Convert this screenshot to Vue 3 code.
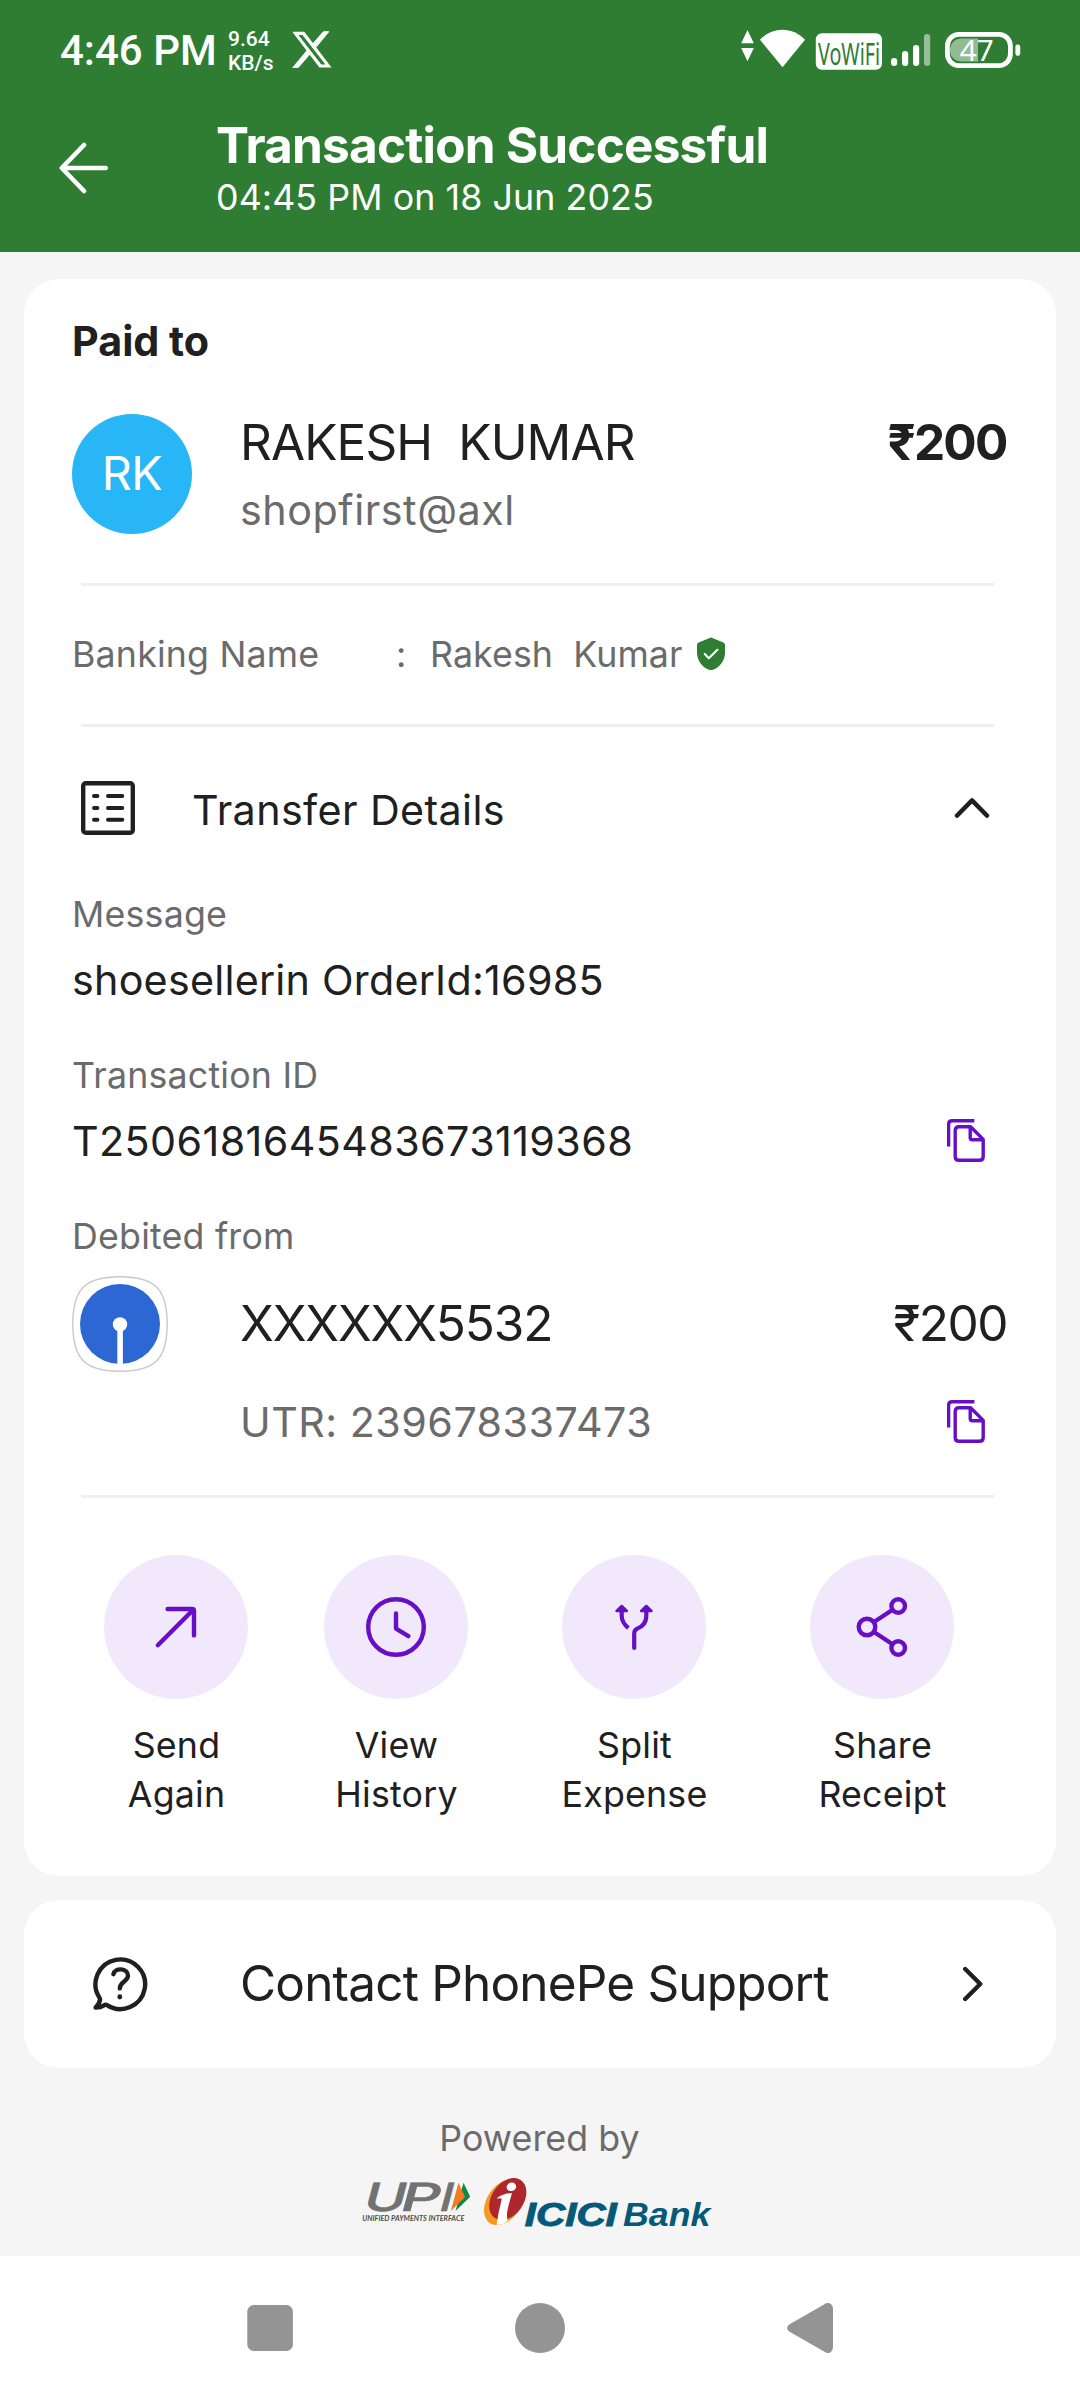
<script setup>
const payeeName = 'RAKESH\u00a0\u00a0KUMAR'
const bankingName = 'Rakesh\u00a0\u00a0Kumar'
const actions = [
  { id: 'send', top: 'Send', bottom: 'Again', cell: 'a1' },
  { id: 'history', top: 'View', bottom: 'History', cell: 'a2' },
  { id: 'split', top: 'Split', bottom: 'Expense', cell: 'a3' },
  { id: 'share', top: 'Share', bottom: 'Receipt', cell: 'a4' }
]
</script>

<template>
  <div class="screen">
    <header class="header">
      <div class="status">
        <span class="clock">4:46 PM</span>
        <span class="speed"><span>9.64</span><span>KB/s</span></span>
        <svg class="x-logo" width="40" height="37" viewBox="0 0 40 37">
          <path d="M36.8.7H31.4L21 12.6 24 16.2ZM.8 36.6H6.2L18.4 22.6 15.4 19Z" fill="#fff" stroke="#fff" stroke-width=".9" />
          <path d="M.3.7H12.3L39.5 36.6H27.4Z" fill="#fff" />
          <path d="M6.4 3.9H10.5L33.4 33.4H29.3Z" fill="#2e7d32" />
        </svg>
        <svg class="status-icons" width="282" height="54" viewBox="0 0 282 54" fill="#fff">
          <path d="M7.5 2 13.8 15.2H1.2ZM7.5 33.3 13.8 20H1.2Z" />
          <path d="M20 11.8C32 -1.6 53 -1.6 65 11.8L42.5 39.3Z" />
          <rect x="75.8" y="5.2" width="66.2" height="36.6" rx="6" />
          <text x="78" y="36.8" fill="#2e7d32" font-family="'Noto Sans'" font-weight="400" font-size="31" textLength="62" lengthAdjust="spacingAndGlyphs">VoWiFi</text>
          <rect x="151" y="30" width="6.2" height="8" rx="3" />
          <rect x="162" y="23" width="6.2" height="15" rx="3" />
          <rect x="173" y="17" width="6.2" height="21" rx="3" />
          <rect x="184" y="6" width="6.2" height="32" rx="3" opacity=".5" />
          <path d="M238 10.6V33.4H221A11 11 0 0 1 210 24V20A11 11 0 0 1 221 10.6Z" opacity=".48" />
          <rect x="207.4" y="6.4" width="63" height="31.2" rx="11.5" fill="none" stroke="#fff" stroke-width="4.8" />
          <rect x="275.4" y="16.4" width="4.8" height="11.4" rx="2.2" />
          <text x="219.8" y="33" font-family="'Noto Sans'" font-weight="400" font-size="29.5" textLength="34" lengthAdjust="spacingAndGlyphs">47</text>
        </svg>
      </div>
      <div class="title-bar">
        <svg class="back" width="50" height="54" viewBox="0 0 50 54" fill="none" stroke="#fff" stroke-width="4.6" stroke-linecap="round" stroke-linejoin="round">
          <path d="M46.7 27H3M25 4 2.8 27 25 50" />
        </svg>
        <div>
          <h1 class="title">Transaction Successful</h1>
          <p class="subtitle">04:45 PM on 18 Jun 2025</p>
        </div>
      </div>
    </header>

    <main>
      <section class="card">
        <h2 class="paid">Paid to</h2>
        <div class="payee">
          <div class="avatar"><span>RK</span></div>
          <div class="payee-text">
            <div class="name">{{ payeeName }}</div>
            <div class="vpa">shopfirst@axl</div>
          </div>
          <div class="amount strong">₹200</div>
        </div>
        <div class="rule"></div>
        <div class="banking">
          <span class="bk-label">Banking Name</span>
          <span class="bk-colon">:</span>
          <span class="bk-name">{{ bankingName }}</span>
          <svg class="shield" width="30" height="34" viewBox="0 0 30 34">
            <path d="M15 .6 27.4 5.6Q29 6.3 29 8V15.5C29 23.5 23.5 30.6 17 32.8Q15 33.4 13 32.8C6.5 30.6 1 23.5 1 15.5V8Q1 6.3 2.6 5.6Z" fill="#2e7d32" />
            <path d="M8.8 17 12.8 21.2 21.4 12.8" fill="none" stroke="#fff" stroke-width="2.2" stroke-linecap="round" stroke-linejoin="round" />
          </svg>
        </div>
        <div class="rule"></div>

        <div class="details-head">
          <svg width="54" height="54" viewBox="0 0 54 54" fill="none" stroke="#202020" stroke-width="4.4">
            <rect x="2.2" y="2.2" width="49.6" height="49.6" rx="2.6" />
            <path d="M13 15H16.4M27 15H41.3M13 27H16.4M27 27H41.3M13 38.8H16.4M27 38.8H41.3" stroke-linecap="round" stroke-width="4" />
          </svg>
          <span class="details-title">Transfer Details</span>
          <svg class="chev-up" width="36" height="22" viewBox="0 0 36 22" fill="none" stroke="#202020" stroke-width="4.4" stroke-linecap="round" stroke-linejoin="round">
            <path d="M3 18.6 18 3.4 33 18.6" />
          </svg>
        </div>

        <div class="field">
          <div class="label">Message</div>
          <div class="value msg">shoesellerin OrderId:16985</div>
        </div>
        <div class="field">
          <div class="label">Transaction ID</div>
          <div class="row">
            <div class="value txn">T2506181645483673119368</div>
            <svg class="copy" width="38" height="43" viewBox="0 0 38 43"><path d="M1.6 27.6V5.2Q1.6 1.7 5.1 1.7H27.4M12 7.8H23.6L36.2 20.4V37.4Q36.2 41.2 32.4 41.2H12Q8.2 41.2 8.2 37.4V11.6Q8.2 7.8 12 7.8ZM23.2 8V18.6Q23.2 20.8 25.4 20.8H36" /></svg>
          </div>
        </div>
        <div class="label debited">Debited from</div>
        <div class="account">
          <svg width="96" height="96" viewBox="0 0 96 96">
            <path d="M48 .8C83 .8 95.2 13 95.2 48S83 95.2 48 95.2 .8 83 .8 48 13 .8 48 .8Z" fill="#fff" stroke="#c8c8c8" stroke-width="1.4" />
            <circle cx="48" cy="48" r="40" fill="#2c67d4" />
            <path d="M45.3 50H50.9V89H45.3Z" fill="#fff" />
            <circle cx="48" cy="48.4" r="7.2" fill="#fff" />
          </svg>
          <div class="acc-no">XXXXXX5532</div>
          <div class="amount">₹200</div>
        </div>
        <div class="row utr-row">
          <div class="utr">UTR: 239678337473</div>
          <svg class="copy" width="38" height="43" viewBox="0 0 38 43"><path d="M1.6 27.6V5.2Q1.6 1.7 5.1 1.7H27.4M12 7.8H23.6L36.2 20.4V37.4Q36.2 41.2 32.4 41.2H12Q8.2 41.2 8.2 37.4V11.6Q8.2 7.8 12 7.8ZM23.2 8V18.6Q23.2 20.8 25.4 20.8H36" /></svg>
        </div>
        <div class="rule"></div>

        <div class="actions">
          <div v-for="a in actions" :key="a.id" class="action" :class="a.cell">
            <div class="bubble">
              <svg width="72" height="72" viewBox="-36 -36 72 72" fill="none" stroke="#660fc6" stroke-width="4.4" stroke-linecap="round" stroke-linejoin="round">
                <path v-if="a.id === 'send'" d="M-18.2 18.2 17-17M-8.4-18H16Q18-18 18-16V8.4" />
                <template v-else-if="a.id === 'history'">
                  <circle r="27.8" />
                  <path d="M0-13.6V1.6L12.4 9.2" />
                </template>
                <template v-else-if="a.id === 'split'">
                  <path d="M-12.3-17V-11Q-12-4-5.6 1" stroke-width="4.2" stroke-linecap="butt" />
                  <path d="M12.3-17V-11C12.3-5.5 9.2-.8 3.6 1.4Q.2 2.9.2 6.4V21" stroke-width="4.2" />
                  <path d="M-12.3-21-17.4-16H-7.2ZM12.3-21 7.2-16H17.4Z" fill="#660fc6" stroke-width="2.6" />
                </template>
                <template v-else>
                  <circle cx="-15" r="8.3" />
                  <circle cx="16.2" cy="-21" r="6.8" />
                  <circle cx="16.2" cy="21" r="6.8" />
                  <path d="M-8-5 10.2-17M-8 5 10.2 17" stroke-linecap="butt" />
                </template>
              </svg>
            </div>
            <div class="action-label">{{ a.top }}<br />{{ a.bottom }}</div>
          </div>
        </div>
      </section>

      <section class="card support">
        <svg width="56" height="56" viewBox="-28 -28 56 56" fill="none" stroke="#202020" stroke-width="4.4" stroke-linecap="round" stroke-linejoin="round">
          <path d="M-20.6 13.6A24.8 24.8 0 1 1 -13 21.2Q-14.4 20.4-16 21.4Q-19.8 23.8-24.4 23.6Q-20.6 19.4-20 16Q-19.8 14.8-20.6 13.6Z" />
          <path d="M-6.6-9.8C-5.2-16.6 8-16.4 8-8.2C8-2.6-.2-2.2-.2 4.4" />
          <path d="M-.2 12.6V13" stroke-width="4.8" />
        </svg>
        <span class="support-text">Contact PhonePe Support</span>
        <svg class="chev-right" width="22" height="36" viewBox="0 0 22 36" fill="none" stroke="#202020" stroke-width="4.4" stroke-linecap="round" stroke-linejoin="round">
          <path d="M3.2 3 18.2 18 3.2 33" />
        </svg>
      </section>

      <div class="powered">
        <div class="powered-text">Powered by</div>
        <svg width="356" height="76" viewBox="0 -14 356 76">
          <g font-family="Inter, sans-serif" font-size="38.8" font-weight="500" fill="#727272" stroke="#727272" stroke-width=".5" transform="translate(0 32.7) skewX(-15)">
            <text transform="translate(-.6 0) scale(1.47 1)">U</text>
            <text transform="translate(36.2 0) scale(1.6 1)">P</text>
            <text transform="translate(75.2 0) scale(1.25 1)">I</text>
          </g>
          <text x="0.3" y="43" font-family="Lato, sans-serif" font-size="7.6" font-weight="700" font-style="italic" fill="#4c4c4c" textLength="102" lengthAdjust="spacingAndGlyphs">UNIFIED PAYMENTS INTERFACE</text>
          <path d="M101.5 4.8 108.2 18.8 93.5 33Z" fill="#0b8a45" />
          <path d="M96.5 4.8 103 19 88.8 33Z" fill="#f47b20" />
          <g transform="translate(143 24)">
            <ellipse rx="25.5" ry="17" transform="translate(-.8 0) rotate(-55)" fill="#f7991c" />
            <ellipse rx="23" ry="16" transform="translate(2.8 -3) rotate(-55)" fill="#ad272d" />
            <ellipse cx="6.4" cy="-15.2" rx="4.8" ry="4.2" transform="rotate(-20 6.4 -15.2)" fill="#fff" />
            <path d="M-7.4-4.4Q0-9.4 7-8.8Q3.6 2 2.2 9.6Q1.6 16.8 2.8 18.4Q-1.6 23.4-8.4 22.6Q-6.6 10 -3.2-3.2Q-5-4.4-7.8-3.2Z" fill="#fff" />
          </g>
          <g font-family="'Liberation Sans', sans-serif" font-style="italic" font-weight="700" fill="#055a78">
            <text x="162.8" y="47.5" font-size="33" stroke="#055a78" stroke-width="1" textLength="92" lengthAdjust="spacingAndGlyphs">ICICI</text>
            <text x="261" y="47.5" font-size="33" textLength="87.5" lengthAdjust="spacingAndGlyphs">Bank</text>
          </g>
        </svg>
      </div>
    </main>

    <nav class="nav">
      <svg width="1080" height="144" viewBox="0 0 1080 144" fill="#949494">
        <rect x="247.3" y="49" width="45.6" height="46" rx="6.5" />
        <circle cx="540" cy="72" r="25" />
        <path d="M824 48.4Q827.2 45.8 830.6 47.8Q833 49.4 833 53V91Q833 94.6 830.6 96.2Q827.2 98.2 824 95.6L789.2 75.6Q785 72 789.2 68.4Z" />
      </svg>
    </nav>
  </div>
</template>

<style>
body { background: #f5f5f5; }
</style>

<style scoped>
* { box-sizing: border-box; margin: 0; padding: 0; }
.screen {
  width: 1080px; height: 2400px; display: flex; flex-direction: column; overflow: hidden;
  background: #f5f5f5; color: #202020; font-family: Inter, "Noto Sans", sans-serif; font-size: 35.75px;
}
svg { display: block; flex: none; }
.header { height: 252px; background: #2e7d32; color: #fff; }
.status { display: flex; height: 115px; font-family: Roboto, sans-serif; font-weight: 500; padding-left: 60px; white-space: nowrap; }
.clock { width: 168px; font-size: 42px; line-height: 50px; padding-top: 26px; }
.speed { display: flex; flex-direction: column; width: 64px; font-size: 21px; line-height: 24px; padding-top: 27px; }
.x-logo { margin-top: 31px; }
.status-icons { margin: 28px 0 0 408px; }
.title-bar { display: flex; }
.back { margin: 26px 107px 0 59px; }
.title { font-size: 49.5px; line-height: 60px; font-weight: 700; letter-spacing: -.8px; }
.subtitle { font-size: 35.75px; line-height: 44px; letter-spacing: .08px; }

.card { margin: 27px 24px 0; padding: 37px 48px 57px; background: #fff; border-radius: 35px; }
.paid { font-size: 41.25px; line-height: 50px; font-weight: 700; }
.payee { display: flex; margin-top: 46px; }
.avatar { width: 120px; height: 120px; margin-top: 2px; padding-bottom: 2px; border-radius: 50%; background: #29b6f6; color: #fff; font-size: 46.75px; letter-spacing: -.6px; display: flex; align-items: center; justify-content: center; }
.payee-text { flex: 1; margin-left: 48px; }
.name { font-size: 49.5px; line-height: 60px; letter-spacing: -.89px; }
.vpa { margin-top: 13px; font-size: 41.25px; line-height: 50px; color: #6b6b6b; letter-spacing: .55px; }
.amount { font-size: 49.5px; line-height: 60px; letter-spacing: -1.5px; margin-right: 1px; }
.amount.strong { font-weight: 700; letter-spacing: -1.8px; margin-right: 1.5px; }
.rule { height: 3px; background: #efefef; margin: 48px 14px 0 9px; }
.banking { display: flex; margin-top: 46px; line-height: 44px; color: #6b6b6b; }
.bk-label { width: 324px; letter-spacing: .18px; }
.bk-colon { width: 34px; }
.bk-name { width: 266px; letter-spacing: .08px; }
.shield { margin-top: 5px; }
.details-head { display: flex; margin-top: 54px; height: 54px; padding-left: 9px; }
.details-title { margin: 4px 0 0 57px; font-size: 41.25px; line-height: 50px; letter-spacing: .39px; }
.chev-up { margin: 16px 18px 0 auto; }
.field { margin-top: 48px; }
.details-head + .field { margin-top: 57px; }
.label { line-height: 44px; color: #6b6b6b; letter-spacing: .2px; }
.value { margin-top: 19px; font-size: 41.25px; line-height: 50px; }
.msg { letter-spacing: .24px; }
.txn { letter-spacing: .4px; }
.row { display: flex; justify-content: space-between; }
.copy { margin: 3px 23px 0 0; fill: none; stroke: #660fc6; stroke-width: 3.4; stroke-linecap: butt; stroke-linejoin: round; }
.field .copy { margin-top: 22px; }
.debited { margin-top: 48px; }
.account { display: flex; margin-top: 18px; height: 96px; }
.acc-no { margin: 17px auto 0 72px; font-size: 49.5px; line-height: 60px; letter-spacing: -1.12px; }
.account .amount { margin-top: 17px; }
.utr-row { margin-top: 25px; padding-left: 168px; }
.utr { font-size: 41.25px; line-height: 50px; color: #6b6b6b; letter-spacing: .47px; }
.actions { display: flex; margin-top: 57px; }
.action { flex: none; width: 160px; display: flex; flex-direction: column; align-items: center; }
.a1 { margin-left: 24px; }
.a2 { margin-left: 60px; }
.a3 { margin-left: 78px; }
.a4 { margin-left: 88px; }
.bubble { width: 144px; height: 144px; border-radius: 50%; background: #f2e8fc; display: flex; align-items: center; justify-content: center; }
.action-label { margin-top: 22px; line-height: 49px; height: 98px; text-align: center; letter-spacing: .2px; padding-left: 1px; }
.support { display: flex; align-items: center; height: 168px; margin-top: 24px; padding: 0 48px 0 68px; }
.support-text { margin: -2px auto 0 92px; font-size: 49.5px; line-height: 60px; letter-spacing: -.82px; }
.chev-right { margin-right: 24px; }
.powered { display: flex; flex-direction: column; align-items: center; margin-top: 48px; color: #6b6b6b; }
.powered-text { line-height: 44px; letter-spacing: .06px; padding-right: 1px; }
.powered svg { margin-top: 4px; }
.nav { margin-top: auto; height: 144px; background: #fff; }
</style>
